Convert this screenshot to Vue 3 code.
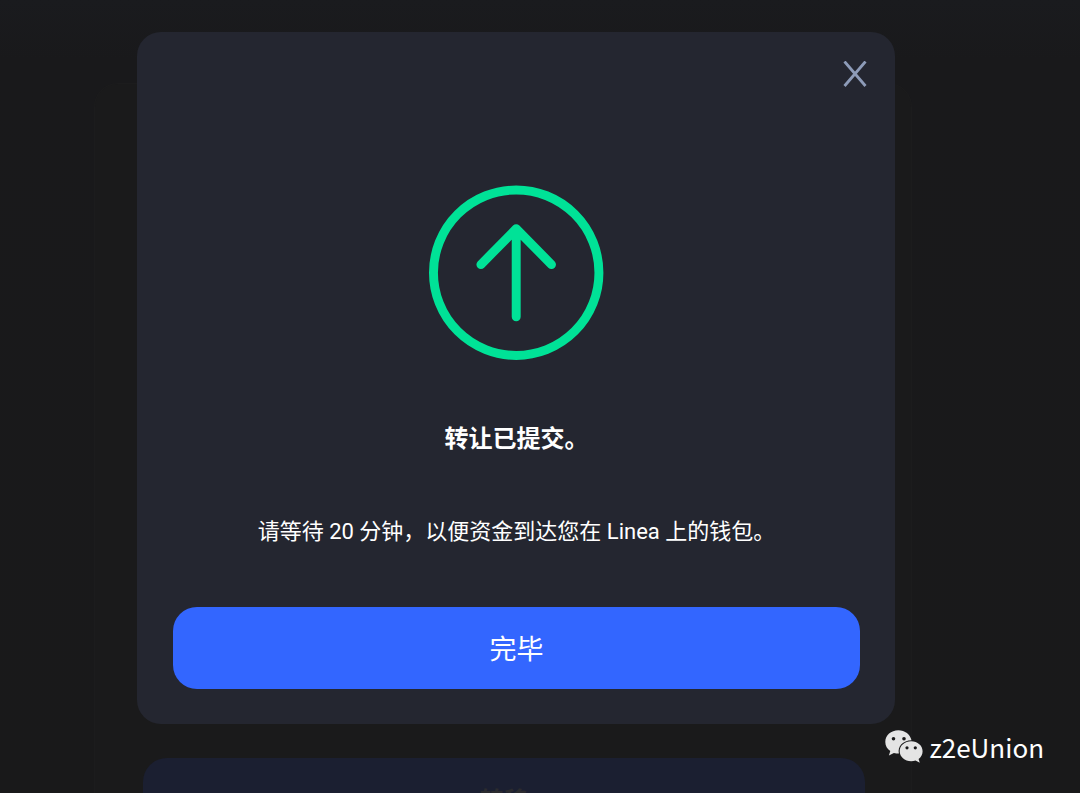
<script setup>
import { ref } from 'vue'

const open = ref(true)
const close = () => {
  open.value = false
}
</script>

<template>
  <div class="page">
    <main class="panel">
      <button class="transfer" type="button">转移</button>
    </main>

    <div v-if="open" class="overlay">
      <section class="dialog" role="dialog" aria-modal="true" aria-labelledby="dialog-title">
        <button class="close" type="button" aria-label="关闭" @click="close">
          <svg width="24" height="26" viewBox="0 0 24 26" aria-hidden="true">
            <path d="M1.500 .5 22.500 25M22.500 .5 1.500 25" fill="none" stroke="#8d9bb8" stroke-width="2.800" />
          </svg>
        </button>
        <svg class="status" viewBox="0 0 176 176" aria-hidden="true">
          <g fill="none" stroke="#00e297" stroke-width="9" stroke-linecap="round" stroke-linejoin="round">
            <circle cx="87.700" cy="87.700" r="83.200" />
            <path d="M87.700 132V43.500M52.200 79.500 87.700 43.500 123.200 79.500" />
          </g>
        </svg>
        <h1 id="dialog-title" class="title">转让已提交。</h1>
        <p class="message">请等待 20 分钟，以便资金到达您在 Linea 上的钱包。</p>
        <button class="done" type="button" @click="close">完毕</button>
      </section>
    </div>

    <div class="credit">
      <svg width="38" height="34" viewBox="0 0 38 34" aria-hidden="true">
        <path
          fill="#e4e4e4"
          d="M13.300 .2C6.100 .2 .3 5.200 .3 11.900c0 3.900 1.900 7 5 9.100L3.900 25.600l5-2.700c1.600.5 3 .7 5 .7C12.300 16.400 17.800 10.500 26.500 10.200 25.300 4.400 20 .2 13.300.2Z"
        />
        <path
          fill="#e4e4e4"
          d="M26.200 11.200c-6.500 0-11.500 4.400-11.500 10s5 10 11.500 10c1.600 0 3-.2 4.300-.7l4.300 2.300-1.200-3.900c2.600-1.900 4-4.600 4-7.700 0-5.600-5-10-11.400-10Z"
        />
        <g fill="#19191a">
          <circle cx="8.500" cy="8.700" r="1.800" />
          <circle cx="19" cy="8.700" r="1.800" />
          <circle cx="22" cy="17.800" r="1.600" />
          <circle cx="30.300" cy="17.800" r="1.600" />
        </g>
      </svg>
      <span>z2eUnion</span>
    </div>
  </div>
</template>

<style>
body {
  margin: 0;
  background: #19191a;
}
</style>

<style scoped>
.page {
  position: relative;
  box-sizing: border-box;
  display: flex;
  flex-direction: column;
  height: 100vh;
  padding: 83px 168px 0 94px;
  overflow: hidden;
  background: linear-gradient(#1a1b1e, #19191b 60px, #19191a 100%);
  color: #fff;
  font-family: Roboto, "Noto Sans CJK SC", sans-serif;
}

.page * {
  box-sizing: border-box;
}

.panel {
  flex: 1;
  display: flex;
  flex-direction: column;
  justify-content: flex-end;
  padding: 0 46px 0 48px;
  border: 1px solid #1c1c1d;
  border-bottom: 0;
  border-radius: 24px 24px 0 0;
  background: #1a1a1b;
}

button {
  padding: 0;
  border: 0;
  font-family: inherit;
  cursor: pointer;
}

.transfer {
  flex: none;
  height: 82px;
  margin-bottom: -47px;
  padding-top: 4px;
  border-radius: 24px;
  background: #1b1f31;
  color: #2b2b2f;
  font-size: 24px;
  font-weight: 700;
  line-height: 32px;
}

.overlay {
  position: absolute;
  inset: 0;
  padding: 32px 185px 0 137px;
}

.dialog {
  position: relative;
  display: flex;
  flex-direction: column;
  align-items: center;
  padding: 153px 35px 35px 36px;
  border-radius: 24px;
  background: #242630;
}

.close {
  position: absolute;
  top: 24px;
  right: 22px;
  display: grid;
  place-items: center;
  width: 36px;
  height: 36px;
  background: transparent;
}

.status {
  width: 175px;
  height: 176px;
}

.title {
  margin: 62px 0 0;
  font-size: 24px;
  font-weight: 700;
  line-height: 32px;
}

.message {
  margin: 61px 0 0;
  font-size: 22px;
  line-height: 32px;
}

.done {
  width: 100%;
  height: 82px;
  margin-top: 59px;
  padding-top: 4px;
  border-radius: 24px;
  background: #3366ff;
  color: #fff;
  font-size: 27px;
  line-height: 36px;
}

.credit {
  position: absolute;
  right: 36px;
  bottom: 28px;
  display: flex;
  align-items: center;
  gap: 6px;
  font-family: "Noto Sans CJK SC", sans-serif;
  font-size: 26px;
  line-height: 36px;
}
</style>
